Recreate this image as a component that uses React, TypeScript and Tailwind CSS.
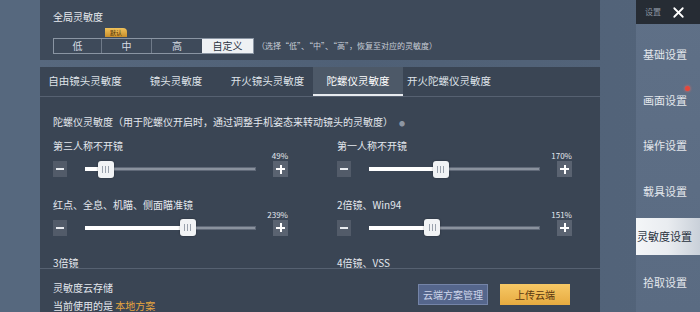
import { X } from "lucide-react";

type SliderItem = { label: string; pct: string; v: number };

const rows: SliderItem[][] = [
  [
    { label: "第三人称不开镜", pct: "49%", v: 12 },
    { label: "第一人称不开镜", pct: "170%", v: 42 },
  ],
  [
    { label: "红点、全息、机瞄、侧面瞄准镜", pct: "239%", v: 60 },
    { label: "2倍镜、Win94", pct: "151%", v: 37 },
  ],
];

// 第三行只露出标题，其余在滚动区以下
const peek = ["3倍镜", "4倍镜、VSS"];

const tabs = [
  { label: "自由镜头灵敏度", w: "w-[90px]" },
  { label: "镜头灵敏度", w: "w-[92px]" },
  { label: "开火镜头灵敏度", w: "w-[91px]" },
  { label: "陀螺仪灵敏度", w: "w-[90px]", active: true },
  { label: "开火陀螺仪灵敏度", w: "w-[92px]" },
];

const menu = ["基础设置", "画面设置", "操作设置", "载具设置", "灵敏度设置", "拾取设置"];

function Slider({ item }: { item: SliderItem }) {
  return (
    <div className="flex w-[235px] flex-col">
      <div className="h-[11px] text-[10px] leading-[11px] text-[#e4e8ee]">{item.label}</div>
      <div className="h-[10px] text-right text-[8px] leading-[10px] text-[#e4e8ee]">{item.pct}</div>
      <div className="flex h-[16px] items-center">
        <div className="flex h-[16px] w-[14px] items-center justify-center bg-[#525b69]">
          <div className="h-[2px] w-[8px] bg-[#e8ebef]" />
        </div>
        <div className="relative ml-[18px] flex h-[16px] w-[171px] items-center">
          <div className="absolute inset-x-0 h-[4px] border border-[#5f6877] bg-[#8a929e]" />
          <div className="absolute left-0 h-[4px] bg-white" style={{ width: `${item.v}%` }} />
          <div
            className="absolute flex h-[17px] w-[16px] items-center justify-center gap-[2px] rounded-[3px] bg-[#f1f3f5] shadow-[0_0_2px_rgba(0,0,0,0.4)]"
            style={{ left: `calc(${item.v}% - 8px)` }}
          >
            <div className="h-[7px] w-px bg-[#9aa2ad]" />
            <div className="h-[7px] w-px bg-[#9aa2ad]" />
            <div className="h-[7px] w-px bg-[#9aa2ad]" />
          </div>
        </div>
        <div className="relative ml-auto flex h-[16px] w-[15px] items-center justify-center bg-[#5a6371]">
          <div className="h-[2px] w-[9px] bg-white" />
          <div className="absolute h-[9px] w-[2px] bg-white" />
        </div>
      </div>
    </div>
  );
}

export default function App() {
  return (
    <div className="flex h-[312px] w-[700px] overflow-hidden bg-gradient-to-r from-[#58697f] via-[#4f6076] to-[#53647a] font-['Noto_Sans_CJK_SC','Liberation_Sans',sans-serif]">
      <div className="w-[40px] shrink-0 bg-[#56687e]" />

      <div className="flex w-[560px] shrink-0 flex-col">
        {/* 全局灵敏度 */}
        <div className="h-[64px] bg-[#3e4a5a] pl-[13px] pt-[11px]">
          <div className="text-[10px] leading-[12px] text-[#e8ebef]">全局灵敏度</div>
          <div className="mt-[5px] flex h-[10px] pl-[52px]">
            <div className="flex h-[9px] w-[22px] items-center justify-center rounded-tr-[4px] bg-gradient-to-b from-[#f0c25a] to-[#c98f2a] text-[6px] leading-none text-[#4a2e08]">
              默认
            </div>
          </div>
          <div className="flex items-center">
            <div className="flex h-[16px] border border-[#8a95a3] text-[10px] leading-none text-[#d8dde4]">
              <div className="flex w-[48px] items-center justify-center border-r border-[#6f7a89]">低</div>
              <div className="flex w-[50px] items-center justify-center border-r border-[#6f7a89]">中</div>
              <div className="flex w-[50px] items-center justify-center">高</div>
              <div className="flex w-[51px] items-center justify-center bg-[#eef1f4] text-[#2a3340]">自定义</div>
            </div>
            <div className="ml-[3px] text-[8px] leading-none text-[#c8ced7]">
              （选择“低”、“中”、“高”，恢复至对应的灵敏度）
            </div>
          </div>
        </div>

        <div className="h-[8px]" />

        {/* 灵敏度面板 */}
        <div className="flex flex-1 flex-col bg-[#3a4554]">
          <div className="flex h-[30px] border-b border-[#566171]">
            {tabs.map((t) => (
              <div
                key={t.label}
                className={`relative flex ${t.w} items-center justify-center text-[10.5px] leading-none ${
                  t.active ? "bg-[#4d5968] text-white" : "text-[#dfe3e9]"
                }`}
              >
                {t.label}
                {t.active && <div className="absolute inset-x-0 bottom-0 h-[2px] bg-[#e8ebef]" />}
              </div>
            ))}
          </div>

          <div className="h-[171px] pl-[13px] pt-[19px]">
            <div className="text-[10px] leading-[12px] text-[#e4e8ee]">
              陀螺仪灵敏度（用于陀螺仪开启时，通过调整手机姿态来转动镜头的灵敏度）
              <span className="ml-[6px] text-[6px] text-[#8d96a3]">●</span>
            </div>
            <div className="mt-[10px] flex flex-col gap-[21.5px]">
              {rows.map((r, i) => (
                <div key={i} className="flex gap-[49px]">
                  <Slider item={r[0]} />
                  <Slider item={r[1]} />
                </div>
              ))}
              <div className="flex gap-[49px] text-[10px] leading-[11px] text-[#e4e8ee]">
                <div className="w-[235px]">{peek[0]}</div>
                <div className="w-[235px]">{peek[1]}</div>
              </div>
            </div>
          </div>

          <div className="flex flex-1 justify-between border-t border-[#566171] pl-[13px] pr-[30px]">
            <div className="pt-[13px] text-[10px] leading-[12px] text-[#e4e8ee]">
              <div>灵敏度云存储</div>
              <div className="mt-[6px]">
                当前使用的是 <span className="text-[#e6a53e]">本地方案</span>
              </div>
            </div>
            <div className="flex gap-[12px] pt-[15px]">
              <div className="flex h-[21px] w-[70px] items-center justify-center border border-[#7484a8] bg-[#55668c] text-[10px] leading-none text-[#cdd5ea]">
                云端方案管理
              </div>
              <div className="flex h-[21px] w-[70px] items-center justify-center bg-gradient-to-b from-[#f6c865] to-[#e7ab40] text-[10px] leading-none text-[#5a3810]">
                上传云端
              </div>
            </div>
          </div>
        </div>
      </div>

      <div className="w-[36px] shrink-0" />

      {/* 侧边菜单 */}
      <div className="flex w-[64px] shrink-0 flex-col bg-gradient-to-b from-[#5f7087] to-[#5a6b82]">
        <div className="flex h-[24px] items-center bg-[#262c34] pl-[9px]">
          <span className="text-[8px] leading-none text-[#8c96a2]">设置</span>
          <X className="ml-[9px] h-[17px] w-[17px] text-white" strokeWidth={2.5} />
        </div>
        <div className="flex flex-col pt-[8px]">
          {menu.map((m, i) => {
            const active = m === "灵敏度设置";
            return (
              <div key={m} className="relative flex h-[45.5px] items-center">
                {active ? (
                  <div className="flex h-[37px] w-full items-center bg-gradient-to-r from-[#f4f6f8] via-[#e9ecf0] to-[#c9d0d9] pl-[1px] text-[11px] leading-none text-[#27303c]">
                    {m}
                  </div>
                ) : (
                  <div className="pl-[7px] text-[11px] leading-none text-[#e3e7ec]">{m}</div>
                )}
                {i === 1 && (
                  <div className="absolute right-[10px] top-[8px] h-[5px] w-[5px] rounded-full bg-[#e4473b] shadow-[0_0_3px_#ff6a5a]" />
                )}
              </div>
            );
          })}
        </div>
      </div>
    </div>
  );
}
